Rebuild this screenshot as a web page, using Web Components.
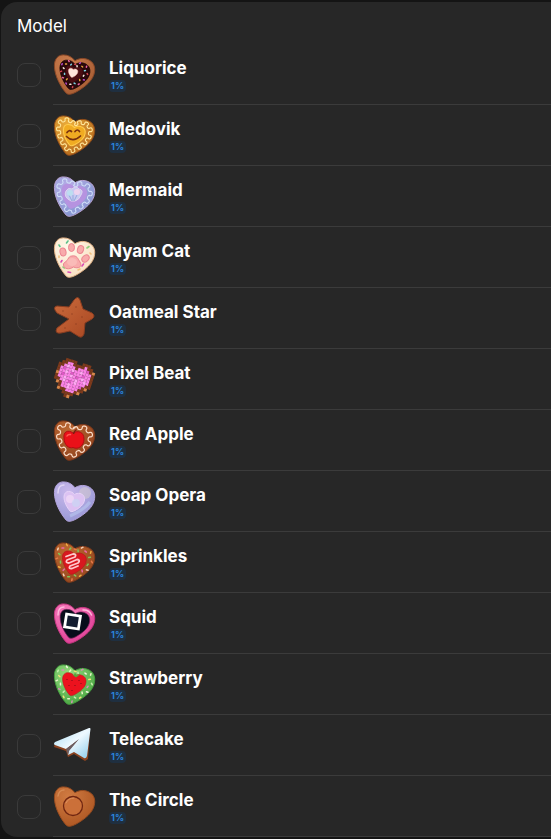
<!DOCTYPE html>
<html lang="en">
<head>
<meta charset="utf-8">
<meta name="viewport" content="width=device-width, initial-scale=1">
<title>Model</title>
<style>
    body {
        margin: 0;
        padding: 2px 0 2px 1px;
        background: #141414;
        color: #fff;
        font-family: Inter, "Liberation Sans", sans-serif;
    }
</style>
</head>
<body>
<model-picker>
    <span slot="title">Model</span>
    <model-row icon="liquorice" share="1%">Liquorice</model-row>
    <model-row icon="medovik" share="1%">Medovik</model-row>
    <model-row icon="mermaid" share="1%">Mermaid</model-row>
    <model-row icon="nyam" share="1%">Nyam Cat</model-row>
    <model-row icon="star" share="1%">Oatmeal Star</model-row>
    <model-row icon="pixel" share="1%">Pixel Beat</model-row>
    <model-row icon="apple" share="1%">Red Apple</model-row>
    <model-row icon="soap" share="1%">Soap Opera</model-row>
    <model-row icon="sprinkles" share="1%">Sprinkles</model-row>
    <model-row icon="squid" share="1%">Squid</model-row>
    <model-row icon="strawberry" share="1%">Strawberry</model-row>
    <model-row icon="telecake" share="1%">Telecake</model-row>
    <model-row icon="circle" share="1%">The Circle</model-row>
</model-picker>

<script>
// ICON HELPERS

const HEART = "M12 40C6 33 0 22 0 12C0 5 4 1 9 1C14 1 18 3 21 7C24 5 28 4 32 5C38 6.500 42 11 41 18C40 27 31 34 22 39C17 41.500 14 42 12 40Z";

// a smaller heart around the point (x, y)
function heart(scale, x, y, attrs) {
    return `<path d="${HEART}" transform="translate(${x} ${y}) scale(${scale}) translate(-20 -20)" ${attrs}/>`;
}

// cookie base: gradient fill, dark rim and a soft light on the top left
function base(light, dark, rim) {
    return `
        <defs>
            <radialGradient id="g" cx="35%" cy="25%" r="80%">
                <stop offset="0" stop-color="${light}"/>
                <stop offset="1" stop-color="${dark}"/>
            </radialGradient>
        </defs>
        ${heart(0.98, 20, 20.5, `fill="url(#g)" stroke="${rim}" stroke-width="1"`)}`;
}

// points along a heart, with the normal at each of them
function walk(scale, x, y, count) {
    const path = document.createElementNS("http://www.w3.org/2000/svg", "path");
    path.setAttribute("d", HEART);
    const total = path.getTotalLength();
    const points = [];
    for (let i = 0; i < count; i++) {
        const p = path.getPointAtLength(total * i / count);
        const q = path.getPointAtLength((total * i / count + 0.5) % total);
        const len = Math.hypot(q.x - p.x, q.y - p.y) || 1;
        points.push({
            x: (p.x - 20) * scale + x,
            y: (p.y - 20) * scale + y,
            nx: (q.y - p.y) / len,
            ny: -(q.x - p.x) / len
        });
    }
    return points;
}

// wavy line of icing with round loops
function icing(color, width, waves, size) {
    const count = waves * 12;
    const d = walk(0.78, 20, 20.5, count).map((p, i) => {
        const t = i / 12 * Math.PI * 2;
        const off = Math.sin(t) * size;
        const lean = Math.sin(t * 2) * 0.7;
        return `${(p.x + p.nx * off + p.ny * lean).toFixed(2)} ${(p.y + p.ny * off - p.nx * lean).toFixed(2)}`;
    });
    return `<path d="M${d.join("L")}Z" fill="none" stroke="${color}" stroke-width="${width}" stroke-linejoin="round"/>`;
}

function sprinkles(scale, count, colors, size) {
    return walk(scale, 20, 20.5, count).map((p, i) => {
        const off = i % 2 ? 1.5 : -1.3;
        const angle = i * 67;
        return `<rect x="${-size / 2}" y="-.700" width="${size}" height="1.500" rx=".6" fill="${colors[i % colors.length]}"
            transform="translate(${p.x + p.nx * off} ${p.y + p.ny * off}) rotate(${angle})"/>`;
    }).join("");
}

// b = crust, p = pink, d = dark pink, l = light pink, o = light crumb
const PIXELS = [
    "..bbbb..bbb..",
    ".bbppbbbbpbb.",
    "bbplppbpppdbo",
    "bpdpplpplpppb",
    "bpplpdpppdppb",
    "opdpplpdplppb",
    "bpplppplpplpb",
    "bbplpdplpppbb",
    ".obpplpppdbo.",
    "..bpplpppbb..",
    "..obbpppbo...",
    "....bbbb.....",
    ".....bo......"
];

function pixels() {
    const colors = { b: "#7d3a1c", p: "#fa82e4", d: "#de58c4", l: "#ffa8f2", o: "#d8874a" };
    let out = "";
    PIXELS.forEach((row, y) => {
        [...row].forEach((c, x) => {
            if (c !== ".") out += `<rect x="${x * 3}" y="${y * 3}" width="3.100" height="3.100" fill="${colors[c]}"/>`;
        });
    });
    return `<g transform="translate(7 -2) rotate(18) scale(.97)">${out}</g>`;
}

// ICONS

const icons = {
    liquorice: () => base("#cd8050", "#a65b32", "#8a4826") +
        heart(0.73, 20.5, 21, 'fill="#2a080b" stroke="#140304"') +
        heart(0.42, 20, 20.5, 'fill="#4b0d12"') +
        sprinkles(0.58, 24, ["#f4e9df", "#b84ad0", "#e8a53f", "#ed65a6", "#7fd0e0", "#d24552"], 2.4) +
        heart(0.23, 19, 19.5, 'fill="#ffe6dc" stroke="#f6c0b2" stroke-width="2"'),

    medovik: () => base("#eeb03c", "#b3661b", "#8e4b18") +
        icing("#ffe79c", 1.1, 14, 1.9) +
        heart(0.53, 20, 20.5, 'fill="#f0ab22" stroke="#ffcb4d" stroke-width="2"') +
        `<path d="M13 18.500q2-3 4.500-1M21 17.500q2.500-3 4.500 0M12.500 22.500Q19 29 26.500 22" fill="none" stroke="#79320f" stroke-width="1.700" stroke-linecap="round"/>`,

    mermaid: () => base("#b9aee8", "#8295cf", "#b9a3d2") +
        heart(0.62, 20, 20.5, 'fill="#b693e0"') +
        icing("#cfdcf7", 1.1, 12, 1.9) +
        `<path d="M17 26Q9 22 12 16Q14 12 18 14Q22 10 25 14Q30 15 27 20Q25 25 21 26Z" fill="#c8c9f2" stroke="#ddd5ef"/>
        <path d="M18 26L15 20M19 26V20M20 26L23 20" stroke="#91a9dc" stroke-width="1"/>
        <circle cx="16" cy="18" r="3" fill="#b7e5ef" opacity=".7"/>
        <circle cx="23" cy="17" r="3" fill="#f6d6ee" opacity=".8"/>`,

    nyam: () => base("#fff8ea", "#f8dfc0", "#e3b184") +
        `<g stroke-width="1.600" stroke-linecap="round">
            <path d="M5 9l1 1.500M14 5l-1.500 2" stroke="#5cc08a"/>
            <path d="M33 12l2-1.500M9 31l1.500 1" stroke="#8fce7d"/>
            <path d="M7 26l1-1.500M14 36l2.500 .5M28 30l1.500-2" stroke="#d94bb4"/>
            <path d="M5 20v1.500M36 17l1 1M24 34l2-1" stroke="#f3c07c"/>
        </g>
        <g fill="#f8abab" stroke="#ec8590">
            <ellipse cx="9" cy="16" rx="3" ry="4" transform="rotate(-12 9 16)"/>
            <ellipse cx="17.500" cy="11.500" rx="3" ry="4"/>
            <ellipse cx="26.500" cy="13.500" rx="3" ry="4" transform="rotate(20 26.500 13.500)"/>
            <ellipse cx="31.500" cy="22.500" rx="3" ry="4" transform="rotate(50 31.500 22.500)"/>
            <path d="M18 20C23 19 24 23 26 26C29 31 24 33 19.500 31C15 34 10 33 9.500 29C9 26 13 26 14 23C15 21 16 20 18 20Z"/>
        </g>
        <ellipse cx="18" cy="26" rx="5" ry="4" fill="#fcc6c2" opacity=".6"/>`,

    star: () => `
        <defs><linearGradient id="g" x1="0" y1="0" x2="1" y2="1">
            <stop offset="0" stop-color="#cb6b3c"/><stop offset="1" stop-color="#a84722"/>
        </linearGradient></defs>
        <path d="M20 3Q24 -2 26 3L29 12L38 16Q42 19 38 22L31 26L30 37Q28 42 24 39L16 34L7 36Q0 37 3 31L15 22L3 16Q-2 10 3 9L15 10Z" fill="url(#g)" stroke="#8a3d20"/>
        <g fill="#80341b" opacity=".35">
            <circle cx="22" cy="10" r="1"/><circle cx="18" cy="17" r="1"/><circle cx="28" cy="20" r="1"/>
            <circle cx="22" cy="27" r="1"/><circle cx="11" cy="31" r="1"/><circle cx="9" cy="14" r="1"/>
        </g>`,

    pixel: () => pixels(),

    apple: () => base("#bb6832", "#8f421d", "#7b361a") +
        icing("#fbdcc8", 1.2, 11, 2.1) +
        `<path d="M19 14C14 10 9 13 10 19C10 26 15 30 19 28.500C24 31 30 27 30 20C30 13 24 11 19 14Z" fill="#ea1119" stroke="#b40b13"/>
        <path d="M19.500 15Q20 12 22.500 10.500" fill="none" stroke="#742012" stroke-width="1.400"/>
        <path d="M13 17Q14 15 16.500 15.500" fill="none" stroke="#ff5a54" stroke-width="1.500" stroke-linecap="round"/>`,

    soap: () => base("#c9b8eb", "#9798d6", "#b4a4dd") +
        `<circle cx="31" cy="13" r="6" fill="#d3c9d1" opacity=".6"/>
        <path d="M4 13Q4 5 10 5" fill="none" stroke="#eee3fa" stroke-width="1.500" stroke-linecap="round" opacity=".7"/>
        <path d="M16 36Q30 30 36 22" fill="none" stroke="#bbcff4" stroke-width="3" opacity=".5"/>` +
        heart(0.5, 20, 21, 'fill="#dcc2f2" stroke="#e7d4f8" stroke-width="2"') +
        `<circle cx="16" cy="19" r="4" fill="#f2dcf6" opacity=".7"/>
        <circle cx="22" cy="23" r="4" fill="#c7d8f4" opacity=".6"/>`,

    sprinkles: () => base("#bf6c32", "#93461e", "#81391a") +
        sprinkles(0.8, 24, ["#7fc75b", "#f4d3b8", "#ee67a8", "#f0ae42", "#7fc75b", "#e87b4a"], 3.2) +
        heart(0.58, 20, 21, 'fill="#d8181f" stroke="#b0141a"') +
        `<path d="M12 15.500L19 13Q23 13 21 16L13 19Q11 22 15 22L23 18.500Q27 19 24 22L16 25Q14 28 18 27.500L24 25" fill="none" stroke="#ffc9cc" stroke-width="1.800" stroke-linecap="round" stroke-linejoin="round"/>`,

    squid: () => base("#fa83c0", "#dd3c94", "#c73682") +
        `<path d="M4 13Q4 5 10 5M29 8Q35 7.500 37.500 13" fill="none" stroke="#ffb5da" stroke-width="1.500" stroke-linecap="round"/>` +
        heart(0.72, 20.5, 21, 'fill="#080d1b" stroke="#79245d"') +
        `<rect x="11.500" y="13" width="14" height="13" fill="#131c30" stroke="#fff" stroke-width="2.800" transform="rotate(9 18.500 19.500)"/>`,

    strawberry: () => base("#95dc80", "#4aa642", "#45a040") +
        sprinkles(0.8, 24, ["#e6f6c4", "#f4e27d", "#c4efab", "#d58fb8", "#f1f8dc"], 3) +
        heart(0.57, 20, 20.5, 'fill="#ec121e" stroke="#b8141b"') +
        `<path d="M17 11L19.500 13L21 9.500L22.500 12L26 11.500L22 14.500Z" fill="#5aa53a"/>
        <path d="M13 16v1M18 17v1M25 17v1M15 22v1M21 22v1M27 20v1M18 27v1" stroke="#8c1018" stroke-width="1.200"/>`,

    telecake: () => `
        <defs><linearGradient id="g" x1="0" y1="0" x2="1" y2="1">
            <stop offset="0" stop-color="#a7dcf3"/><stop offset=".5" stop-color="#eef9ff"/><stop offset="1" stop-color="#8ccbea"/>
        </linearGradient></defs>
        <path d="M1 19L0 23L12 27L14 33L20 30L31 37L34 35L36 7Z" fill="#8a421f"/>
        <path d="M35 4L1 18Q-1 20 1 21L12 25L24 16L15 26L14 31L20 28L30 34Q32 35 33 32L36.500 5Q36.500 3.500 35 4Z" fill="url(#g)"/>
        <path d="M12 25L25 15L15 27L14 31Z" fill="#6b5e62"/>`,

    circle: () => base("#d07b42", "#ad5622", "#984c20") +
        `<circle cx="19" cy="21" r="9.500" fill="#cb7039" stroke="#702611" stroke-width="1.300"/>
        <path d="M12 18Q14 13 20 13" fill="none" stroke="#df925f" stroke-width="1" stroke-linecap="round"/>
        <path d="M4 11Q5 5 10 5" fill="none" stroke="#df9b66" stroke-width="1.500" stroke-linecap="round" opacity=".6"/>`
};

// COMPONENTS

class CookieIcon extends HTMLElement {
    constructor() {
        super();
        this.attachShadow({ mode: "open" });
    }

    connectedCallback() {
        const draw = icons[this.getAttribute("name")];
        this.shadowRoot.innerHTML = `
            <style>
                :host {
                    display: block;
                    flex: none;
                    width: 42px;
                    height: 42px;
                }
                svg {
                    display: block;
                    overflow: visible;
                }
            </style>
            <svg width="42" height="42" viewBox="0 0 42 42" aria-hidden="true">${draw ? draw() : ""}</svg>
        `;
    }
}
customElements.define("cookie-icon", CookieIcon);

class ModelRow extends HTMLElement {
    constructor() {
        super();
        this.attachShadow({ mode: "open" });
    }

    connectedCallback() {
        this.shadowRoot.innerHTML = `
            <style>
                :host {
                    display: flex;
                    align-items: stretch;
                    padding-left: 16px;
                }
                input {
                    appearance: none;
                    box-sizing: border-box;
                    flex: none;
                    width: 24px;
                    height: 24px;
                    margin: 19px 12px 0 0;
                    border: 1px solid #3a3a3a;
                    border-radius: 8px;
                }
                input:checked {
                    background: #2481cc;
                }
                label {
                    display: flex;
                    flex: 1;
                    gap: 13px;
                    padding: 9px 0 9px 1px;
                    border-bottom: 1px solid #3b3b3b;
                }
                .text {
                    display: flex;
                    flex-direction: column;
                    align-items: flex-start;
                    gap: 1px;
                    padding-top: 4px;
                }
                .name {
                    font-size: 17px;
                    font-weight: 650;
                    line-height: 22px;
                }
                .share {
                    padding: 0 2px;
                    border-radius: 4px;
                    background: #1f2f40;
                    color: #2b83da;
                    font-size: 9px;
                    font-weight: 700;
                    line-height: 12px;
                }
            </style>
            <input type="checkbox" id="pick">
            <label for="pick">
                <cookie-icon name="${this.getAttribute("icon")}"></cookie-icon>
                <span class="text">
                    <span class="name"><slot></slot></span>
                    <span class="share">${this.getAttribute("share")}</span>
                </span>
            </label>
        `;
    }
}
customElements.define("model-row", ModelRow);

class ModelPicker extends HTMLElement {
    constructor() {
        super();
        this.attachShadow({ mode: "open" });
        this.shadowRoot.innerHTML = `
            <style>
                :host {
                    display: block;
                    overflow: hidden;
                    border-radius: 16px 0 0 16px;
                    background: #272727;
                }
                h2 {
                    margin: 0;
                    padding: 12px 16px 6px;
                    font-size: 17px;
                    font-weight: 400;
                    line-height: 24px;
                }
            </style>
            <h2><slot name="title"></slot></h2>
            <slot></slot>
        `;
    }
}
customElements.define("model-picker", ModelPicker);
</script>
</body>
</html>
